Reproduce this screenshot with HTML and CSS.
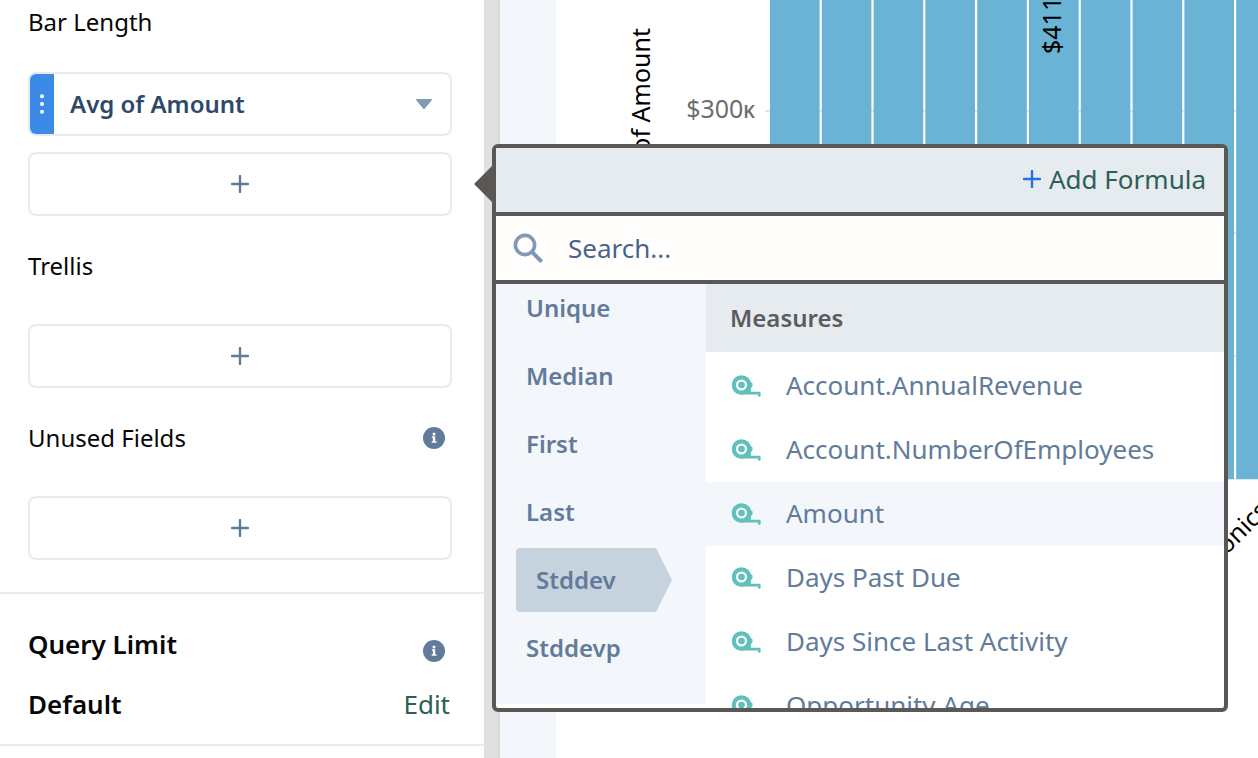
FILE: index.html
```
<!DOCTYPE html>
<html lang="en">
<head>
    <meta charset="UTF-8">
    <meta name="viewport" content="width=device-width, initial-scale=1.0">
    <title>Explorer</title>

    <link rel="stylesheet" href="styles.css">
</head>
<body>

    <!--  Shared icons  -->

    <svg class="sprite" aria-hidden="true">
        <symbol id="plus" viewBox="0 0 18 18">
            <path d="M9 1v16M1 9h16" fill="none" stroke="currentColor" stroke-width="2.4" stroke-linecap="round"/>
        </symbol>
        <symbol id="info" viewBox="0 0 22 22">
            <circle cx="11" cy="11" r="11" fill="currentColor"/>
            <circle cx="11" cy="7" r="1.5" fill="#fff"/>
            <path d="M8.9 9.3h3.3v4.9h1.3v1.5H8.7v-1.5h1.2v-3.4h-1z" fill="#fff"/>
        </symbol>
        <symbol id="tape" viewBox="0 0 30 22">
            <circle cx="10.500" cy="10" r="7.700" fill="none" stroke="currentColor" stroke-width="4.200"/>
            <circle cx="10.500" cy="10" r="3.300" fill="currentColor"/>
            <path d="M18 7.500h2.200q1.300 0 1.300 1.300v2.500q0 1.300-1.300 1.300h-.4v4.200h8.500q1.300 0 1.300 1.200v2.700q0 1-1 1h-.6q-1 0-1-1v-1.200H9.500L15 16z" fill="currentColor"/>
        </symbol>
    </svg>

    <div id="wrapper">
        <aside class="sidebar">
            <section class="fields">
                <h2 class="first">Bar Length</h2>

                <button type="button" class="pill">
                    <span class="handle">
                        <svg width="4" height="20" viewBox="0 0 4 20" fill="#fff"><circle cx="2" cy="2.300" r="2"/><circle cx="2" cy="10" r="2"/><circle cx="2" cy="17.700" r="2"/></svg>
                    </span>
                    <span class="pill-text">Avg of Amount</span>
                    <svg class="caret" width="18" height="12" viewBox="0 0 18 12"><path d="M1.200 1h15.600q.8 0 .3.700l-7.400 9q-.7.800-1.400 0L.9 1.700Q.4 1 1.200 1z" fill="currentColor"/></svg>
                </button>

                <div class="anchor">
                    <button type="button" class="add" aria-label="Add bar length"><svg width="18" height="18"><use href="#plus"/></svg></button>

                    <!--  Measure picker  -->

                    <div class="popover">
                        <div class="popover-head">
                            <button type="button" class="formula"><svg width="18" height="18"><use href="#plus"/></svg>Add Formula</button>
                        </div>

                        <label class="search">
                            <svg width="30" height="30" viewBox="0 0 30 30" fill="none" stroke="currentColor"><circle cx="12" cy="12" r="9.600" stroke-width="3.600"/><path d="M19 19l8.500 8.500" stroke-width="4" stroke-linecap="round"/></svg>
                            <input type="text" placeholder="Search..." aria-label="Search">
                        </label>

                        <div class="picker">
                            <div class="functions">
                                <button type="button">Unique</button>
                                <button type="button">Median</button>
                                <button type="button">First</button>
                                <button type="button">Last</button>
                                <button type="button" class="selected">Stddev</button>
                                <button type="button">Stddevp</button>
                            </div>

                            <div class="measures">
                                <h3>Measures</h3>
                                <button type="button"><svg width="30" height="22"><use href="#tape"/></svg><span>Account.AnnualRevenue</span></button>
                                <button type="button"><svg width="30" height="22"><use href="#tape"/></svg><span>Account.NumberOfEmployees</span></button>
                                <button type="button" class="hover"><svg width="30" height="22"><use href="#tape"/></svg><span>Amount</span></button>
                                <button type="button"><svg width="30" height="22"><use href="#tape"/></svg><span>Days Past Due</span></button>
                                <button type="button"><svg width="30" height="22"><use href="#tape"/></svg><span>Days Since Last Activity</span></button>
                                <button type="button"><svg width="30" height="22"><use href="#tape"/></svg><span>Opportunity Age</span></button>
                            </div>
                        </div>
                    </div>
                </div>

                <h2>Trellis</h2>
                <button type="button" class="add" aria-label="Add trellis"><svg width="18" height="18"><use href="#plus"/></svg></button>

                <h2>Unused Fields <svg width="22" height="22"><use href="#info"/></svg></h2>
                <button type="button" class="add" aria-label="Add unused field"><svg width="18" height="18"><use href="#plus"/></svg></button>
            </section>

            <section class="limit">
                <div class="row">Query Limit <svg width="22" height="22"><use href="#info"/></svg></div>
                <div class="row">Default <a href="#">Edit</a></div>
            </section>
        </aside>

        <div class="gutter"></div>

        <main class="stage">
            <svg class="chart" width="702" height="758" font-size="25">
                <g fill="#e0e5ee">
                    <rect x="209" y="110" width="493" height="2"/>
                    <rect x="209" y="232" width="493" height="2"/>
                    <rect x="209" y="355" width="493" height="2"/>
                    <rect x="209" y="478" width="493" height="2"/>
                </g>
                <g fill="#6bb3d5">
                    <rect x="214" y="0" width="49.600" height="479"/>
                    <rect x="265.800" y="0" width="49.600" height="479"/>
                    <rect x="317.600" y="0" width="49.600" height="479"/>
                    <rect x="369.400" y="0" width="49.600" height="479"/>
                    <rect x="421.200" y="0" width="49.600" height="479"/>
                    <rect x="473" y="0" width="49.600" height="479"/>
                    <rect x="524.800" y="0" width="49.600" height="479"/>
                    <rect x="576.600" y="0" width="49.600" height="479"/>
                    <rect x="628.400" y="0" width="49.600" height="479"/>
                    <rect x="680.200" y="0" width="49.600" height="479"/>
                </g>
                <text transform="translate(94 28) rotate(-90)" text-anchor="end">of Amount</text>
                <text x="199" y="118" text-anchor="end" fill="#706e6b">$300<tspan font-size="18" font-weight="600">K</tspan></text>
                <text transform="translate(505 54) rotate(-90)">$411</text>
                <text transform="translate(714 512) rotate(-45)" text-anchor="end">Electronics</text>
            </svg>
        </main>
    </div>

</body>
</html>
```
FILE: styles.css
```
* {
    margin: 0;
    padding: 0;
    box-sizing: border-box;
}

body {
    font-family: "Noto Sans", "Open Sans", sans-serif;
    font-size: 24px;
    line-height: 36px;
    color: #080707;
    background-color: #fff;
}

button,
input {
    font: inherit;
    color: inherit;
    background: none;
    border: 0;
}

button {
    cursor: pointer;
}

svg {
    flex-shrink: 0;
}

.sprite {
    display: none;
}

#wrapper {
    display: flex;
    height: 100vh;
    overflow: hidden;
}

/* sidebar */

.sidebar {
    flex: 0 0 484px;
}

.fields {
    padding: 4px 32px 32px 28px;
    border-bottom: 2px solid #e6ebef;
}

h2 {
    display: flex;
    align-items: center;
    justify-content: space-between;
    padding-right: 7px;
    margin: 32px 0 40px;
    font-size: 24px;
    font-weight: 400;
}

h2.first {
    margin: 0 0 32px;
}

h2 svg,
.row svg {
    color: #627b9a;
}

.pill,
.add {
    display: flex;
    align-items: center;
    width: 100%;
    height: 64px;
    border: 2px solid #e6ebef;
    border-radius: 8px;
    background-color: #fff;
}

.pill {
    margin-bottom: 16px;
    padding-right: 17px;
    color: #2d486b;
    font-weight: 600;
}

.handle {
    display: flex;
    align-items: center;
    justify-content: center;
    width: 24px;
    height: 100%;
    background-color: #3c8ae8;
    border-radius: 6px 0 0 6px;
}

.pill-text {
    flex: 1;
    padding-left: 16px;
    text-align: left;
}

.caret {
    color: #8199b5;
}

.add {
    justify-content: center;
    color: #627b9a;
}

.anchor {
    position: relative;
}

.limit {
    padding: 32px 34px 22px 28px;
    border-bottom: 2px solid #e6ebef;
}

.row {
    display: flex;
    align-items: flex-end;
    justify-content: space-between;
    font-size: 26px;
    font-weight: 600;
}

.row + .row {
    margin-top: 24px;
}

.row svg {
    margin-right: 5px;
}

.row a {
    color: #2c5f55;
    font-weight: 400;
    text-decoration: none;
}

/* popover */

.popover {
    position: absolute;
    z-index: 2;
    left: calc(100% + 40px);
    top: -8px;
    width: 736px;
    background-color: #fff;
    border: 4px solid #5a5856;
    border-radius: 6px;
}

.popover::before {
    content: "";
    position: absolute;
    left: -22px;
    top: 18px;
    border: 18px solid transparent;
    border-left: 0;
    border-right-color: #5a5856;
}

.popover-head {
    display: flex;
    align-items: center;
    justify-content: flex-end;
    height: 68px;
    padding: 0 18px 2px;
    background-color: #e6ebef;
    border-bottom: 4px solid #5a5856;
}

.formula {
    display: flex;
    align-items: center;
    gap: 8px;
    color: #2c5f55;
    font-size: 26px;
}

.formula svg {
    color: #2574d4;
}

.search {
    display: flex;
    align-items: center;
    gap: 25px;
    height: 68px;
    padding: 0 17px;
    color: #8199b5;
    background-color: #fffefd;
    border-bottom: 4px solid #5a5856;
}

.search input {
    flex: 1;
    color: #3f5b7f;
    font-size: 26px;
    outline: none;
}

.search input::placeholder {
    color: #48648a;
    opacity: 1;
}

.picker {
    display: flex;
    height: 424px;
    overflow: hidden;
    color: #627b9a;
}

.functions {
    display: flex;
    flex-direction: column;
    gap: 4px;
    width: 210px;
    height: 420px;
    padding: 0 34px 0 20px;
    background-color: #f3f6fb;
    overflow: hidden;
}

.functions button {
    flex: 0 0 64px;
    padding-left: 10px;
    font-weight: 600;
    text-align: left;
}

.functions button:first-child {
    margin-top: -8px;
}

.functions .selected {
    padding-left: 20px;
    background-color: #c6d2de;
    border-radius: 4px;
    clip-path: polygon(0 0, calc(100% - 16px) 0, 100% 50%, calc(100% - 16px) 100%, 0 100%);
}

.measures {
    flex: 1;
}

h3 {
    height: 68px;
    margin-bottom: 2px;
    padding-left: 24px;
    font-size: 24px;
    font-weight: 600;
    line-height: 68px;
    color: #5a5c60;
    background-color: #e6ebef;
}

.measures button {
    display: flex;
    align-items: center;
    gap: 25px;
    width: 100%;
    height: 64px;
    padding-left: 25px;
    font-size: 26px;
}

.measures span {
    padding-bottom: 3px;
}

.measures svg {
    color: #5fc0bc;
}

.measures .hover {
    background-color: #f3f6fb;
}

/* chart */

.gutter {
    flex: 0 0 16px;
    background-color: #e1e0df;
    border-right: 2px solid #dcdbdc;
}

.stage {
    flex: 1;
    min-width: 0;
    padding-left: 56px;
    background: linear-gradient(to right, #f3f6fb 56px, #fff 56px);
    overflow: hidden;
}

.chart {
    display: block;
}
```
